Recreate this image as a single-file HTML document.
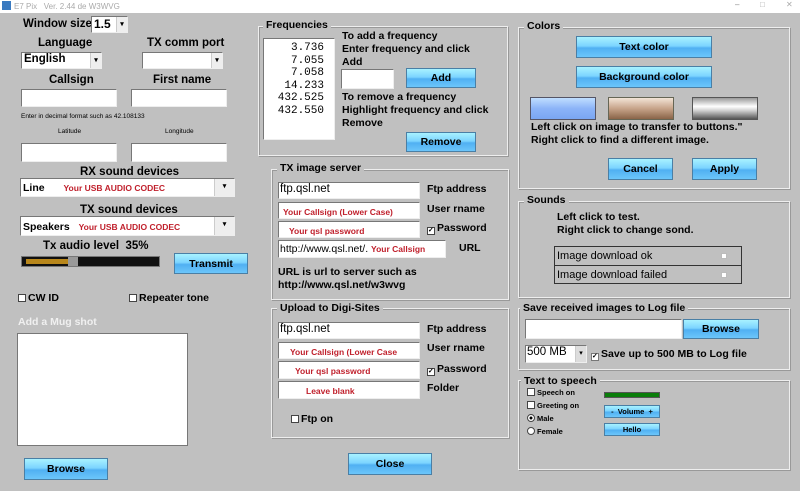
<!DOCTYPE html>
<html><head><meta charset="utf-8"><style>
*{box-sizing:border-box;margin:0;padding:0}
body{width:800px;height:491px;background:#c0c0c0;font-family:"Liberation Sans",sans-serif;font-weight:bold;font-size:10.5px;color:#000;position:relative;overflow:hidden}
.a{position:absolute;white-space:nowrap}
.tb{position:absolute;left:0;top:0;width:800px;height:13px;background:#fff;font-weight:normal;font-size:8px;color:#aaa}
.g{position:absolute;border:1px solid #eee;box-shadow:inset 1px 1px 0 #999,1px 1px 0 #999}
.gt{position:absolute;background:#c0c0c0;padding:0 3px;font-size:10.5px}
.in{position:absolute;background:#fff;border-top:1px solid #777;border-left:1px solid #777;border-bottom:1px solid #eee;border-right:1px solid #eee}
.btn{position:absolute;background:linear-gradient(#a8f2ff 0%,#7cd4ff 45%,#50b0f2 55%,#6cc6fa 100%);border:1px solid #4a7fa5;text-align:center;font-size:10.5px}
.red{color:#c0202c;font-size:8.5px}
.dd{position:absolute;width:11px;background:#eee;border-left:1px solid #ccc;font-size:7px;line-height:15px;text-align:center;right:0;top:0;bottom:0}
.cb{display:inline-block;width:8px;height:8px;border:1px solid #444;background:#fff;vertical-align:-1px;margin-right:2px}
.sm{font-size:7.5px}
.L{font-size:11.5px}
</style></head><body>
<div class="tb"><span style="position:absolute;left:2px;top:1px;width:9px;height:9px;background:#3a7ac0"></span><span style="position:absolute;left:14px;top:2px">E7 Pix &nbsp; Ver. 2.44 de W3WVG</span><span style="position:absolute;left:735px;top:0;color:#888">–</span><span style="position:absolute;left:760px;top:0;color:#aaa">□</span><span style="position:absolute;left:786px;top:0;color:#aaa">✕</span></div>

<div class="a L" style="left:23px;top:18px">Window size</div>
<div class="in" style="left:91px;top:16px;width:37px;height:17px;font-size:12px;padding-left:2px">1.5<div class="dd">▾</div></div>
<div class="a L" style="left:38px;top:37px">Language</div>
<div class="a L" style="left:147px;top:37px">TX comm port</div>
<div class="in" style="left:21px;top:52px;width:81px;height:17px;font-size:11.5px;padding-left:2px">English<div class="dd">▾</div></div>
<div class="in" style="left:142px;top:52px;width:81px;height:17px"><div class="dd">▾</div></div>
<div class="a L" style="left:49px;top:74px">Callsign</div>
<div class="a L" style="left:153px;top:74px">First name</div>
<div class="in" style="left:21px;top:89px;width:96px;height:18px"></div>
<div class="in" style="left:131px;top:89px;width:96px;height:18px"></div>
<div class="a" style="left:21px;top:113px;font-weight:normal;font-size:6.5px">Enter in decimal format such as 42.108133</div>
<div class="a" style="left:58px;top:128px;font-weight:normal;font-size:6.5px">Latitude</div>
<div class="a" style="left:165px;top:128px;font-weight:normal;font-size:6.5px">Longitude</div>
<div class="in" style="left:21px;top:143px;width:96px;height:19px"></div>
<div class="in" style="left:131px;top:143px;width:96px;height:19px"></div>
<div class="a L" style="left:80px;top:166px">RX sound devices</div>
<div class="in" style="left:20px;top:178px;width:215px;height:19px;padding:3px 2px"><span>Line</span> <span class="red" style="margin-left:16px">Your USB AUDIO CODEC</span><div class="dd" style="width:20px">▾</div></div>
<div class="a L" style="left:80px;top:204px">TX sound devices</div>
<div class="in" style="left:20px;top:216px;width:215px;height:20px;padding:4px 2px"><span>Speakers</span> <span class="red" style="margin-left:6px">Your USB AUDIO CODEC</span><div class="dd" style="width:20px">▾</div></div>
<div class="a L" style="left:43px;top:240px">Tx audio level &nbsp;35%</div>
<div class="a" style="left:21px;top:256px;width:139px;height:11px;background:#111;border:1px solid #777"></div>
<div class="a" style="left:26px;top:259px;width:52px;height:5px;background:#b8871c"></div>
<div class="a" style="left:68px;top:257px;width:10px;height:9px;background:#999"></div>
<div class="btn" style="left:174px;top:253px;width:74px;height:21px;line-height:20px">Transmit</div>
<div class="a" style="left:18px;top:292px"><span class="cb"></span>CW ID</div>
<div class="a" style="left:129px;top:292px"><span class="cb"></span>Repeater tone</div>
<div class="a" style="left:18px;top:316px;color:#f0f0f0">Add a Mug shot</div>
<div class="in" style="left:17px;top:333px;width:171px;height:113px;border-color:#777"></div>
<div class="btn" style="left:24px;top:458px;width:84px;height:22px;line-height:21px">Browse</div>

<div class="g" style="left:258px;top:26px;width:250px;height:130px"></div>
<div class="gt" style="left:263px;top:19px">Frequencies</div>
<div class="in" style="left:263px;top:38px;width:72px;height:102px;font-family:'Liberation Mono',monospace;font-weight:normal;font-size:11px;text-align:right;padding:3px 10px 0 0;line-height:12.5px">3.736<br>7.055<br>7.058<br>14.233<br>432.525<br>432.550</div>
<div class="a" style="left:342px;top:30px;line-height:13px">To add a frequency<br>Enter frequency and click<br>Add</div>
<div class="in" style="left:341px;top:69px;width:53px;height:20px"></div>
<div class="btn" style="left:406px;top:68px;width:70px;height:20px;line-height:19px">Add</div>
<div class="a" style="left:342px;top:91px;line-height:13px">To remove a frequency<br>Highlight frequency and click<br>Remove</div>
<div class="btn" style="left:406px;top:132px;width:70px;height:20px;line-height:19px">Remove</div>

<div class="g" style="left:271px;top:169px;width:238px;height:131px"></div>
<div class="gt" style="left:277px;top:162px">TX image server</div>
<div class="in" style="left:278px;top:182px;width:142px;height:17px;font-size:11.5px;font-weight:normal;padding-left:1px">ftp.qsl.net</div>
<div class="a" style="left:427px;top:183px">Ftp address</div>
<div class="in" style="left:278px;top:202px;width:142px;height:17px;padding:3px 0 0 4px"><span class="red">Your Callsign (Lower Case)</span></div>
<div class="a" style="left:427px;top:203px">User rname</div>
<div class="in" style="left:278px;top:221px;width:142px;height:17px;padding:3px 0 0 10px"><span class="red">Your qsl password</span></div>
<div class="a" style="left:427px;top:222px"><span class="cb" style="font-size:7px;line-height:6px">✓</span>Password</div>
<div class="in" style="left:278px;top:240px;width:168px;height:18px;font-size:10.5px;font-weight:normal;padding:2px 0 0 1px">http://www.qsl.net/. <span class="red" style="font-weight:bold">Your Callsign</span></div>
<div class="a" style="left:459px;top:242px">URL</div>
<div class="a" style="left:278px;top:266px;line-height:13px">URL is url to server such as<br>http://www.qsl.net/w3wvg</div>

<div class="g" style="left:271px;top:308px;width:238px;height:130px"></div>
<div class="gt" style="left:277px;top:302px">Upload to Digi-Sites</div>
<div class="in" style="left:278px;top:322px;width:142px;height:17px;font-size:11.5px;font-weight:normal;padding-left:1px">ftp.qsl.net</div>
<div class="a" style="left:427px;top:323px">Ftp address</div>
<div class="in" style="left:278px;top:342px;width:142px;height:17px;padding:3px 0 0 11px"><span class="red">Your Callsign (Lower Case</span></div>
<div class="a" style="left:427px;top:342px">User rname</div>
<div class="in" style="left:278px;top:361px;width:142px;height:18px;padding:3px 0 0 16px"><span class="red">Your qsl password</span></div>
<div class="a" style="left:427px;top:363px"><span class="cb" style="font-size:7px;line-height:6px">✓</span>Password</div>
<div class="in" style="left:278px;top:381px;width:142px;height:18px;padding:3px 0 0 27px"><span class="red">Leave blank</span></div>
<div class="a" style="left:427px;top:382px">Folder</div>
<div class="a" style="left:291px;top:413px"><span class="cb"></span>Ftp on</div>
<div class="btn" style="left:348px;top:453px;width:84px;height:22px;line-height:21px">Close</div>

<div class="g" style="left:518px;top:27px;width:272px;height:162px"></div>
<div class="gt" style="left:524px;top:20px">Colors</div>
<div class="btn" style="left:576px;top:36px;width:136px;height:22px;line-height:21px">Text color</div>
<div class="btn" style="left:576px;top:66px;width:136px;height:22px;line-height:21px">Background color</div>
<div class="a" style="left:530px;top:97px;width:66px;height:23px;background:linear-gradient(#c0deff,#8cb4f8 50%,#7aa6f2);border:1px solid #556"></div>
<div class="a" style="left:608px;top:97px;width:66px;height:23px;background:linear-gradient(#f2e4d6,#c7a48a 50%,#8a6448);border:1px solid #665"></div>
<div class="a" style="left:692px;top:97px;width:66px;height:23px;background:linear-gradient(#9a9a9a,#fff 40%,#d0d0d0 60%,#555);border:1px solid #555"></div>
<div class="a" style="left:531px;top:121px;line-height:13px">Left click on image to transfer to buttons."<br>Right click to find a different image.</div>
<div class="btn" style="left:608px;top:158px;width:65px;height:22px;line-height:21px">Cancel</div>
<div class="btn" style="left:692px;top:158px;width:65px;height:22px;line-height:21px">Apply</div>

<div class="g" style="left:518px;top:201px;width:272px;height:97px"></div>
<div class="gt" style="left:524px;top:194px">Sounds</div>
<div class="a" style="left:557px;top:211px;line-height:13px">Left click to test.<br>Right click to change sond.</div>
<div class="a" style="left:554px;top:246px;width:188px;height:38px;border:1px solid #333"></div>
<div class="a" style="left:554px;top:265px;width:188px;height:1px;background:#333"></div>
<div class="a" style="left:557px;top:250px;font-weight:normal;font-size:11px">Image download ok</div>
<div class="a" style="left:557px;top:269px;font-weight:normal;font-size:11px">Image download failed</div>
<div class="a" style="left:721px;top:253px;width:6px;height:6px;background:#fff;border:1px solid #bbb"></div>
<div class="a" style="left:721px;top:272px;width:6px;height:6px;background:#fff;border:1px solid #bbb"></div>

<div class="g" style="left:518px;top:308px;width:272px;height:62px"></div>
<div class="gt" style="left:520px;top:302px">Save received images to Log file</div>
<div class="in" style="left:525px;top:319px;width:157px;height:20px"></div>
<div class="btn" style="left:683px;top:319px;width:76px;height:20px;line-height:19px">Browse</div>
<div class="in" style="left:525px;top:345px;width:62px;height:18px;font-size:11.5px;font-weight:normal;padding-left:1px">500 MB<div class="dd" style="background:#ddd">▾</div></div>
<div class="a" style="left:591px;top:348px"><span class="cb" style="font-size:7px;line-height:6px;border-color:#777">✓</span>Save up to 500 MB to Log file</div>

<div class="g" style="left:518px;top:380px;width:272px;height:90px"></div>
<div class="gt" style="left:521px;top:375px">Text to speech</div>
<div class="a sm" style="left:527px;top:388px"><span class="cb"></span>Speech on</div>
<div class="a sm" style="left:527px;top:401px"><span class="cb"></span>Greeting on</div>
<div class="a sm" style="left:527px;top:414px"><span class="cb" style="border-radius:50%;background:radial-gradient(#000 30%,#fff 40%)"></span>Male</div>
<div class="a sm" style="left:527px;top:427px"><span class="cb" style="border-radius:50%"></span>Female</div>
<div class="a" style="left:604px;top:392px;width:56px;height:6px;background:#0a7d0a;border:1px solid #555"></div>
<div class="btn sm" style="left:604px;top:405px;width:56px;height:13px;line-height:12px">- &nbsp;Volume &nbsp;+</div>
<div class="btn sm" style="left:604px;top:423px;width:56px;height:13px;line-height:12px">Hello</div>
</body></html>
